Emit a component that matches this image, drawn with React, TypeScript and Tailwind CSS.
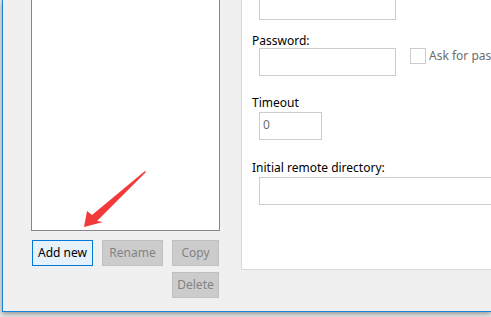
import React from "react";

const font = { fontFamily: '"Noto Sans", "Segoe UI", sans-serif' };

export default function App() {
  return (
    <div
      className="relative w-[491px] h-[317px] overflow-hidden bg-[#e6e6e6] text-[12px] text-black"
      style={font}
    >
      <div className="ml-[2px] h-[312px] border-l border-b border-[#1883d7] bg-[#f0f0f0] flex shadow-[0_2px_5px_rgba(0,0,0,0.35)]">
        {/* left column */}
        <div className="pl-[28px] flex flex-col">
          <div className="w-[189px] h-[231px] border border-t-0 border-[#828790] bg-white" />
          <div className="mt-[9px] flex items-start">
            <button className="ml-[1px] w-[61px] h-[26px] border border-[#0078d7] bg-[#e5f1fb] text-[12px] leading-none text-black">
              Add new
            </button>
            <button className="ml-[9px] w-[61px] h-[26px] border border-[#bfbfbf] bg-[#cccccc] text-[12px] leading-none text-[#838383]">
              Rename
            </button>
            <div className="ml-[9px] flex flex-col gap-[6px]">
              <button className="w-[47px] h-[26px] border border-[#bfbfbf] bg-[#cccccc] text-[12px] leading-none text-[#838383]">
                Copy
              </button>
              <button className="w-[47px] h-[26px] border border-[#bfbfbf] bg-[#cccccc] text-[12px] leading-none text-[#838383]">
                Delete
              </button>
            </div>
          </div>
        </div>
        {/* right panel */}
        <div className="ml-[21px] flex-1 min-w-0 h-[270px] border-l border-b border-[#d9d9d9] bg-white flex flex-col overflow-hidden">
          <div className="ml-[17px] mt-[-8px] w-[137px] h-[28px] border border-[#cccccc] bg-white" />
          <div className="ml-[10px] mt-[13px] h-[15px] leading-[15px]">Password:</div>
          <div className="flex items-start">
            <div className="ml-[17px] shrink-0 w-[137px] h-[28px] border border-[#cccccc] bg-white" />
            <div className="ml-[14px] shrink-0 w-[16px] h-[16px] border border-[#cccccc] bg-white" />
            <span className="ml-[3px] leading-[16px] text-[#6d6d6d] whitespace-nowrap">Ask for password</span>
          </div>
          <div className="ml-[10px] mt-[19px] h-[15px] leading-[15px]">Timeout</div>
          <div className="ml-[17px] mt-[2px] w-[63px] h-[28px] border border-[#cccccc] bg-white pl-[3px] pt-[4px] leading-[15px] text-[#6d6d6d]">
            0
          </div>
          <div className="ml-[10px] mt-[20px] h-[15px] leading-[15px] whitespace-nowrap">Initial remote directory:</div>
          <div className="ml-[17px] mt-[2px] w-[300px] shrink-0 h-[28px] border border-[#cccccc] bg-white" />
        </div>
      </div>
      <svg className="absolute left-0 top-0" width="491" height="317" viewBox="0 0 491 317">
        <polygon
          points="84,227 87,211 92,215 145,171 146,172 97,221 103,222"
          fill="#f23a3a"
        />
      </svg>
    </div>
  );
}
